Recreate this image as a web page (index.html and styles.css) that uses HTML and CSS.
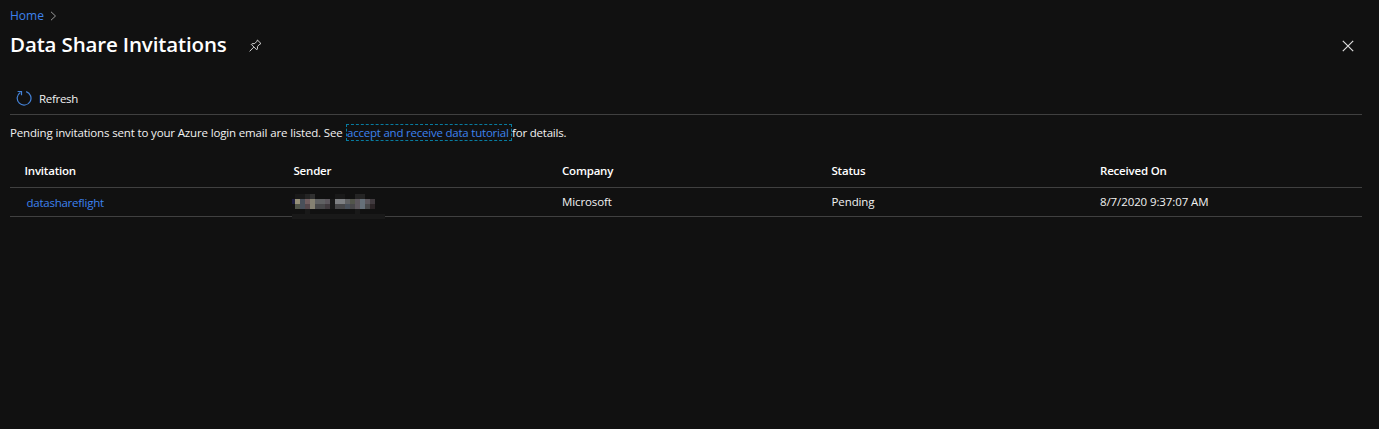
FILE: index.html
```html
<!DOCTYPE html>
<html lang="en">
<head>
<meta charset="utf-8">
<title>Data Share Invitations</title>
<link rel="stylesheet" href="styles.css">
</head>
<body>
<main class="blade">
  <nav class="breadcrumb">
    <a class="home" href="#">Home</a>
    <svg class="chevron" width="7" height="10" viewBox="0 0 7 10"><path d="M1 .8 5.5 5 1 9.2"/></svg>
  </nav>
  <header class="titlebar">
    <h1 class="title">Data Share Invitations</h1>
    <svg class="pin" width="13" height="13" viewBox="0 0 13 13"><path d="M8.4 1 12 4.6 10.9 5 8.6 7.3 8.3 10.2 7.7 10.8 2.3 5.4 2.9 4.8 5.8 4.5 8 2.2ZM4.8 8.1.6 12.4"/></svg>
    <svg class="close" width="12" height="12" viewBox="0 0 12 12"><path d="M.8.8 11.2 11.2M11.2.8.8 11.2"/></svg>
  </header>
  <div class="toolbar">
    <svg class="refresh-icon" width="16" height="16" viewBox="0 0 16 16"><path d="M10.2 1.6A6.9 6.9 0 1 1 4.3 2.4M1.6 1.5H5.5V5.3"/></svg>
    <span class="refresh">Refresh</span>
  </div>
  <p class="note"><span class="before">Pending invitations sent to your Azure login email are listed. See</span><a class="tutorial" href="#">accept and receive data tutorial</a><span class="after">for details.</span></p>
  <section class="grid">
    <div class="row head">
      <span class="h1">Invitation</span><span class="h2">Sender</span><span class="h3">Company</span><span class="h4">Status</span><span class="h5">Received On</span>
    </div>
    <div class="row data">
      <a class="c1" href="#">datashareflight</a>
      <svg class="redacted" width="93" height="25" viewBox="0 0 93 25" shape-rendering="crispEdges">
        <path fill="#191919" d="M0 20h93v5H0zM3 0h10v5H3zM43 0h10v5H43zM13 15h5v5h-5zM63 15h5v5h-5zM38 5h5v10h-5z"/>
        <path fill="#242424" d="M13 0h5v5h-5zM63 0h10v5H63z"/>
        <path fill="#303030" d="M18 0h5v5h-5z"/>
        <path fill="#1c1c3c" d="M0 5h3v5H0z"/>
        <path fill="#969079" d="M3 5h5v5H3z"/>
        <path fill="#52554b" d="M3 10h5v5H3zM58 5h5v5h-5z"/>
        <path fill="#49505a" d="M8 5h5v10H8zM53 10h5v5h-5z"/>
        <path fill="#715e60" d="M13 5h5v5h-5z"/>
        <path fill="#55474b" d="M13 10h5v5h-5z"/>
        <path fill="#858172" d="M18 5h5v10h-5z"/>
        <path fill="#606163" d="M23 5h10v5H23zM53 5h5v5h-5z"/>
        <path fill="#48484a" d="M23 10h10v5H23zM43 10h10v5H43zM58 10h5v5h-5zM73 10h5v5h-5z"/>
        <path fill="#5c575d" d="M33 5h5v5h-5zM63 5h5v10h-5zM73 5h5v5h-5z"/>
        <path fill="#403a3e" d="M33 10h5v5h-5zM78 5h5v5h-5z"/>
        <path fill="#7e8083" d="M43 5h10v5H43z"/>
        <path fill="#667079" d="M68 5h5v10h-5z"/>
        <path fill="#2c2527" d="M78 10h5v5h-5z"/>
      </svg>
      <span class="c3">Microsoft</span><span class="c4">Pending</span><span class="c5">8/7/2020 9:37:07 AM</span>
    </div>
  </section>
</main>
</body>
</html>
```
FILE: styles.css
```css
* { box-sizing: border-box; }
body { margin: 0; background: #111; color: #f2f2f2; font: 11.5px/16px "Open Sans", "Noto Sans", sans-serif; white-space: nowrap; }
a { color: #3d82ee; text-decoration: none; }
svg { fill: none; flex: none; }
.blade { height: 429px; padding: 8px 17px 0 10px; overflow: hidden; }
.breadcrumb { display: flex; align-items: center; gap: 6px; height: 16px; }
.home { width: 34px; font-size: 12px; }
.chevron { stroke: #999; }
.titlebar { display: flex; align-items: center; height: 42px; }
.title { margin: -2px 0 0; width: 239px; font-size: 20.5px; line-height: 28px; font-weight: 600; letter-spacing: -.14px; color: #fff; }
.pin { stroke: #d0d0d0; }
.close { stroke: #ddd; stroke-width: 1.2; margin: 1px 8px 0 auto; }
.toolbar { display: flex; align-items: center; gap: 7px; height: 49px; padding: 17px 0 0 6px; border-bottom: 1px solid #404040; }
.refresh-icon { stroke: #4583d8; stroke-width: 1.2; margin-top: -2px; }
.refresh { letter-spacing: -.3px; }
.note { display: flex; align-items: center; height: 36px; margin: 0 0 2px; }
.before { width: 336px; letter-spacing: -.15px; }
.tutorial { width: 166px; height: 17px; border: 1px dashed #087ca0; line-height: 16px; letter-spacing: -.22px; margin-top: -1px; }
.after { letter-spacing: -.2px; }
.row { display: grid; grid-template-columns: 269px 268.5px 269.5px 268.5px 1fr; align-items: center; padding-left: 14.5px; border-bottom: 1px solid #404040; }
.head { height: 35px; padding-top: 2px; font-weight: 600; color: #fff; letter-spacing: -.2px; }
.data { height: 29px; letter-spacing: -.1px; }
.c1 { padding: 1px 0 0 2px; letter-spacing: -.25px; }
.redacted { margin: 4px 0 -4px -1.5px; }
```
